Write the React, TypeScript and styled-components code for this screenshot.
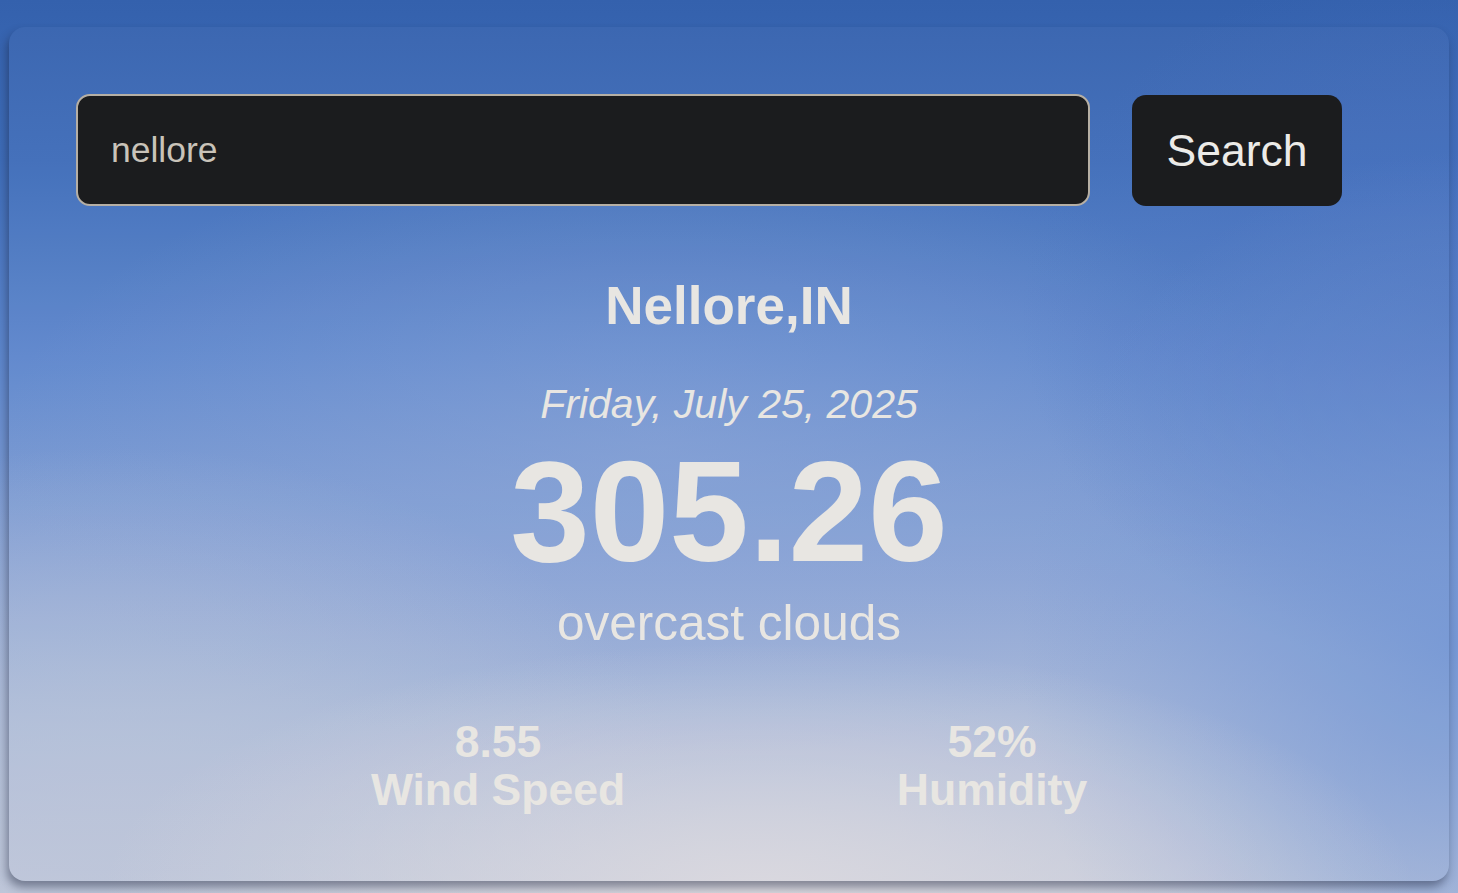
import React from "react";
import styled, { createGlobalStyle } from "styled-components";

const GlobalStyle = createGlobalStyle`
  html, body {
    margin: 0;
    padding: 0;
  }
  body {
    font-family: "Liberation Sans", Arial, sans-serif;
    background-color: #3562ae;
  }
  * { box-sizing: border-box; }
`;

const Page = styled.div`
  width: 100%;
  height: 893px;
  padding: 27px 9px 12px 9px;
  background:
    radial-gradient(ellipse 45% 28% at 52% 100%, rgba(218, 216, 222, 0.95) 0%, rgba(218, 216, 222, 0) 100%),
    radial-gradient(ellipse 40% 45% at 8% 95%, rgba(186, 196, 216, 0.75) 0%, rgba(186, 196, 216, 0) 100%),
    radial-gradient(ellipse 30% 55% at 100% 72%, rgba(112, 148, 212, 0.85) 0%, rgba(112, 148, 212, 0) 100%),
    radial-gradient(ellipse 30% 40% at 100% 35%, rgba(70, 110, 190, 0.7) 0%, rgba(70, 110, 190, 0) 100%),
    radial-gradient(ellipse 45% 35% at 45% 50%, rgba(140, 165, 215, 0.5) 0%, rgba(140, 165, 215, 0) 100%),
    linear-gradient(180deg, #3461ad 0%, #3f6db9 18%, #5e87cd 40%, #86a1d4 62%, #a7b7d8 80%, #c3c9da 100%);
  overflow: hidden;
`;

const Card = styled.main`
  height: 854px;
  border-radius: 16px;
  background: rgba(255, 255, 255, 0.03);
  box-shadow: -2px 6px 10px rgba(25, 32, 55, 0.45);
  padding: 67px 107px 0 67px;
  display: flex;
  flex-direction: column;
  align-items: stretch;
`;

const SearchForm = styled.form`
  display: flex;
  align-items: flex-start;
  gap: 42px;
`;

const SearchInput = styled.input`
  width: 1014px;
  height: 112px;
  border: 2px solid #b6afa4;
  border-radius: 14px;
  background: #1b1c1e;
  color: #c9c3b9;
  font-family: "Liberation Sans", Arial, sans-serif;
  font-size: 35.5px;
  padding: 0 0 0 33px;
  outline: none;
`;

const SearchButton = styled.button`
  width: 210px;
  height: 111px;
  margin-top: 1px;
  border: none;
  border-radius: 14px;
  background: #1b1c1e;
  color: #ecebe8;
  font-family: "Liberation Sans", Arial, sans-serif;
  font-size: 44.5px;
  cursor: pointer;
`;

const Info = styled.section`
  display: flex;
  flex-direction: column;
  align-items: center;
  color: #e8e6e2;
  margin-left: -67px;
  margin-right: -107px;
`;

const City = styled.h1`
  margin: 69px 0 0 0;
  font-size: 53px;
  font-weight: 700;
  line-height: 62px;
`;

const DateLine = styled.p`
  margin: 44px 0 0 0;
  font-size: 41px;
  font-style: italic;
  line-height: 46px;
`;

const Temp = styled.div`
  margin: 11px 0 0 0;
  font-size: 143px;
  font-weight: 700;
  line-height: 148px;
`;

const Description = styled.p`
  margin: 9px 0 0 0;
  font-size: 49.5px;
  line-height: 55px;
`;

const Stats = styled.div`
  display: grid;
  grid-template-columns: 494px 494px;
  justify-content: center;
  margin: 68px -107px 0 -67px;
  padding-left: 32px;
  color: #e8e6e2;
`;

const Stat = styled.div`
  display: flex;
  flex-direction: column;
  align-items: center;
  font-weight: 700;
  font-size: 44.5px;
  line-height: 48px;
`;

export default function App() {
  return (
    <>
      <GlobalStyle />
      <Page>
        <Card>
          <SearchForm onSubmit={(e) => e.preventDefault()}>
            <SearchInput type="text" defaultValue="nellore" />
            <SearchButton type="submit">Search</SearchButton>
          </SearchForm>
          <Info>
            <City>Nellore,IN</City>
            <DateLine>Friday, July 25, 2025</DateLine>
            <Temp>305.26</Temp>
            <Description>overcast clouds</Description>
          </Info>
          <Stats>
            <Stat>
              <span>8.55</span>
              <span>Wind Speed</span>
            </Stat>
            <Stat>
              <span>52%</span>
              <span>Humidity</span>
            </Stat>
          </Stats>
        </Card>
      </Page>
    </>
  );
}
